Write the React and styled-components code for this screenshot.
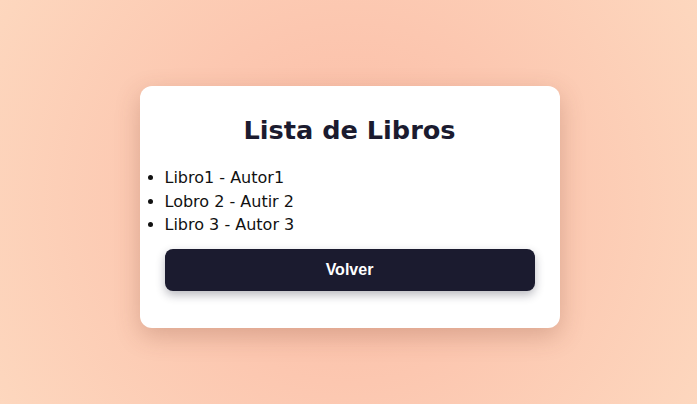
import React from "react";
import styled, { createGlobalStyle } from "styled-components";

const GlobalStyle = createGlobalStyle`
  html, body {
    margin: 0;
    padding: 0;
    height: 100%;
  }
  body {
    font-family: "DejaVu Sans", Verdana, sans-serif;
  }
  #root {
    min-height: 100%;
  }
`;

const Page = styled.main`
  min-height: 404px;
  box-sizing: border-box;
  padding: 10px 0 0 2px;
  display: flex;
  align-items: center;
  justify-content: center;
  background: radial-gradient(circle at 50% 50%, #fbbca5 0%, #fcc7b0 45%, #fdd7be 100%);
`;

const Card = styled.section`
  width: 420px;
  box-sizing: border-box;
  background: #ffffff;
  border-radius: 12px;
  padding: 25px 25px 37px;
  box-shadow: 0 8px 24px rgba(120, 60, 40, 0.25);
`;

const Title = styled.h2`
  margin: 4px 0 21px;
  text-align: center;
  font-family: "DejaVu Sans", Verdana, sans-serif;
  font-size: 25.6px;
  font-weight: bold;
  line-height: normal;
  color: #1b1b2f;
`;

const BookList = styled.ul`
  margin: 0 0 12px;
  padding: 0;
  list-style: disc outside;
`;

const BookItem = styled.li`
  font-family: "DejaVu Sans", Verdana, sans-serif;
  font-size: 16px;
  line-height: 23.5px;
  color: #111;
`;

const BackButton = styled.button`
  display: block;
  width: 100%;
  height: 42px;
  border: none;
  border-radius: 8px;
  background: #1b1b2f;
  color: #ffffff;
  font-family: "Liberation Sans", Arial, sans-serif;
  font-size: 16px;
  font-weight: bold;
  cursor: pointer;
  box-shadow: 0 4px 10px rgba(27, 27, 47, 0.3);
`;

const books = [
  { title: "Libro1", author: "Autor1" },
  { title: "Lobro 2", author: "Autir 2" },
  { title: "Libro 3", author: "Autor 3" },
];

export default function App() {
  return (
    <>
      <GlobalStyle />
      <Page>
        <Card>
          <Title>Lista de Libros</Title>
          <BookList>
            {books.map((b) => (
              <BookItem key={b.title}>
                {b.title} - {b.author}
              </BookItem>
            ))}
          </BookList>
          <BackButton>Volver</BackButton>
        </Card>
      </Page>
    </>
  );
}
